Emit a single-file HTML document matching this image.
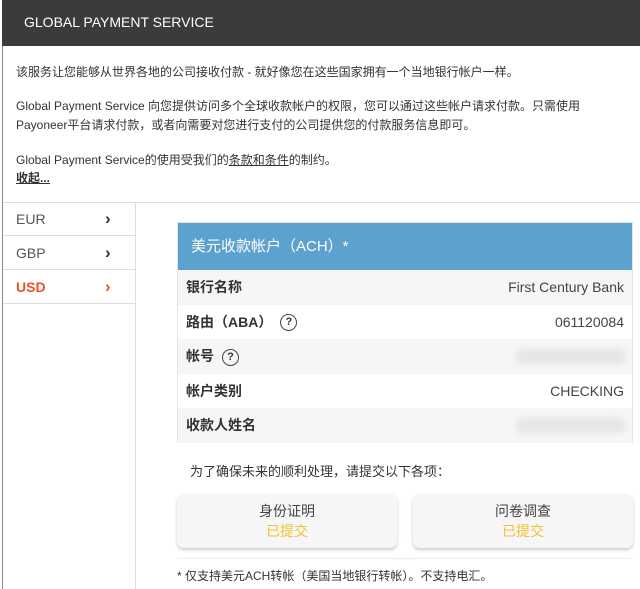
<!DOCTYPE html>
<html><head><meta charset="utf-8"><style>
*{box-sizing:border-box;margin:0;padding:0}
body{width:640px;height:589px;overflow:hidden;background:#fff;font-family:"Liberation Sans","Noto Sans CJK SC",sans-serif;color:#333;position:relative}
.abs{position:absolute}
.hdr{left:2px;top:0;width:638px;height:46px;background:#3b3b3b;color:#fff;font-size:14px;line-height:44px;padding-left:22px}
.frame{left:2px;top:46px;width:638px;height:543px;border-left:1px solid #888}
.t{font-size:12px;left:16px;color:#333;white-space:nowrap}
.sep{left:3px;top:202px;width:637px;height:1px;background:#ddd}
.side{left:3px;top:202px;width:133px;height:387px;border-right:1px solid #ddd}
.cur{position:absolute;left:3px;width:133px;height:34px;border-bottom:1px solid #ddd;font-size:14px;line-height:34px;padding-left:13px;color:#555}
.cur b{position:absolute;left:102px;font-size:17px;color:#333;font-weight:bold}
.card{left:177px;top:222px;width:456px;height:221px;border:1px solid #e4e4e4}
.ch{height:47px;background:#5da1cf;color:#fff;font-size:15px;line-height:47px;padding-left:13px}
.row{height:34.5px;line-height:34px;font-size:14px;padding:0 8px;position:relative;font-weight:bold;color:#333}
.row span{position:absolute;right:8px;top:0;font-weight:normal;color:#444}
.row:nth-child(even){background:#f6f6f6}
.q{display:inline-block;width:17px;height:17px;border:1.5px solid #444;border-radius:50%;font-size:11px;line-height:14px;text-align:center;vertical-align:middle;margin-left:8px;font-weight:bold}
.blur{position:absolute;right:6px;top:10px;width:110px;height:15px;background:#e6e6e6;border-radius:6px;filter:blur(3px)}
.btn{top:494px;width:220px;height:54px;border-radius:7px;background:#f6f6f6;box-shadow:0 2px 3px #ccc;text-align:center;font-size:14px;line-height:20px;padding-top:7px;color:#444}
.btn div{color:#f2c12e}
</style></head><body>
<div class="abs hdr">GLOBAL PAYMENT SERVICE</div>
<div class="abs frame"></div>
<div class="abs t" style="top:63px">该服务让您能够从世界各地的公司接收付款 - 就好像您在这些国家拥有一个当地银行帐户一样。</div>
<div class="abs t" style="top:97px">Global Payment Service 向您提供访问多个全球收款帐户的权限，您可以通过这些帐户请求付款。只需使用</div>
<div class="abs t" style="top:116px">Payoneer平台请求付款，或者向需要对您进行支付的公司提供您的付款服务信息即可。</div>
<div class="abs t" style="top:151px">Global Payment Service的使用受我们的<u>条款和条件</u>的制约。</div>
<div class="abs t" style="top:169px;font-weight:bold"><u>收起...</u></div>
<div class="abs sep"></div>
<div class="abs side"></div>
<div class="cur" style="top:202px">EUR<b>›</b></div>
<div class="cur" style="top:236px">GBP<b>›</b></div>
<div class="cur" style="top:270px;color:#e8532a;font-weight:bold">USD<b style="color:#e8532a">›</b></div>
<div class="abs card">
<div class="ch">美元收款帐户（ACH）*</div>
<div class="row">银行名称<span>First Century Bank</span></div>
<div class="row">路由（ABA）<i class="q" style="font-style:normal">?</i><span>061120084</span></div>
<div class="row">帐号<i class="q" style="font-style:normal">?</i><div class="blur"></div></div>
<div class="row">帐户类别<span>CHECKING</span></div>
<div class="row">收款人姓名<div class="blur"></div></div>
</div>
<div class="abs" style="left:190px;top:461px;font-size:13px;color:#333">为了确保未来的顺利处理，请提交以下各项：</div>
<div class="abs btn" style="left:177px">身份证明<div>已提交</div></div>
<div class="abs btn" style="left:413px">问卷调查<div>已提交</div></div>
<div class="abs" style="left:177px;top:558px;width:456px;height:1px;background:#eee"></div>
<div class="abs" style="left:177px;top:567px;font-size:12px;color:#333">* 仅支持美元ACH转帐（美国当地银行转帐）。不支持电汇。</div>
</body></html>
